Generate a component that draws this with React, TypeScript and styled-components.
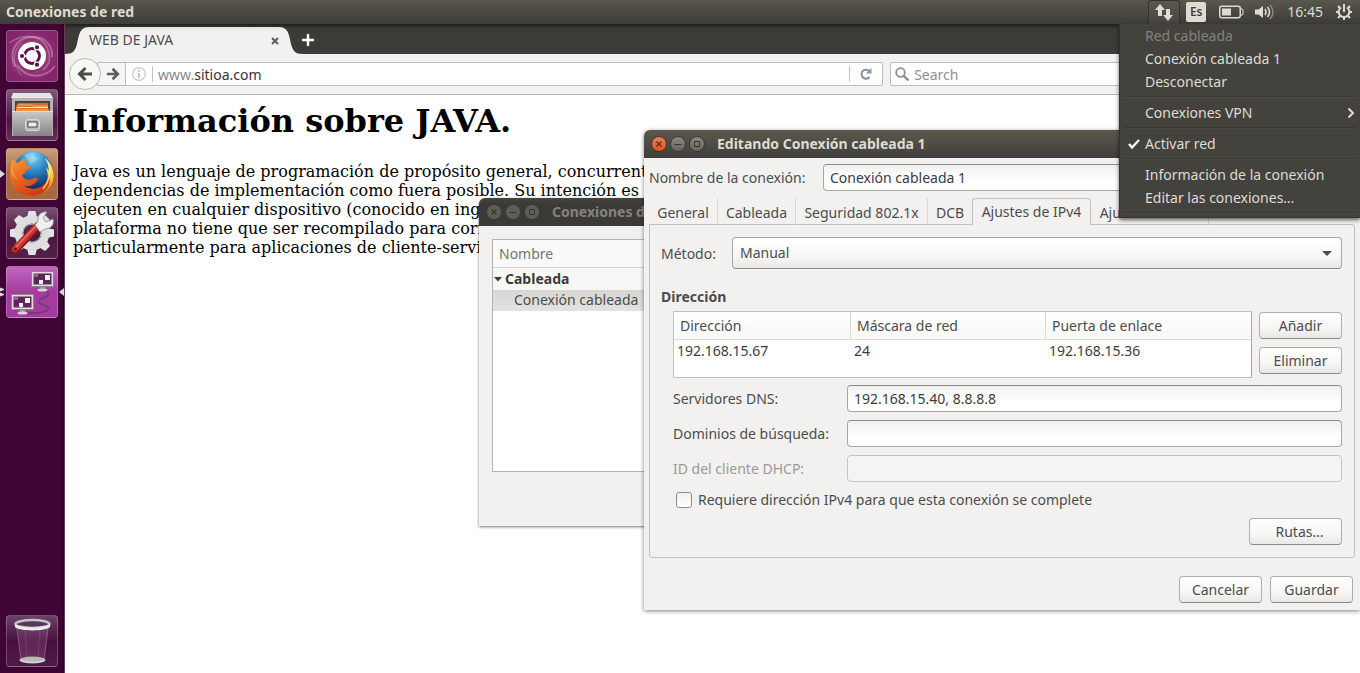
import React from 'react';
import styled, { createGlobalStyle, css } from 'styled-components';

const UI = '"Noto Sans", "Open Sans", sans-serif';

const GlobalStyle = createGlobalStyle`
  *, *::before, *::after { box-sizing: border-box; }
  body { margin: 0; background: #fff; font-family: ${UI}; font-size: 14px; color: #4c4c4c; }
  button, input, select { font: inherit; color: inherit; margin: 0; }
  button { cursor: pointer; }
  svg { display: block; flex: none; }
`;

/* ---------- Desktop and top bar ---------- */

const Desktop = styled.div`
  position: relative;
  display: flex;
  flex-direction: column;
  min-height: 100vh;
  overflow: hidden;
`;

const TopBar = styled.header`
  display: flex;
  align-items: center;
  justify-content: space-between;
  height: 24px;
  padding: 0 7px 0 6px;
  background: linear-gradient(#5a574d, #45433d 70%, #3f3e38);
  color: #dfdbd2;
`;

const AppTitle = styled.span`
  font-weight: 700;
  line-height: 24px;
`;

const Indicators = styled.div`
  display: flex;
  align-items: center;
  height: 24px;
`;

const Indicator = styled.button<{ $open?: boolean; $gap?: number }>`
  display: flex;
  align-items: center;
  justify-content: center;
  height: 24px;
  padding: 0;
  border: 0;
  background: none;
  color: #dfdbd2;
  line-height: 24px;
  margin-left: ${(p) => p.$gap ?? 12}px;
  ${(p) =>
    p.$open &&
    css`
      width: 32px;
      border: 1px solid #33322e;
      border-bottom: 0;
      border-radius: 4px 4px 0 0;
      background: linear-gradient(#5a584f, #45443e);
    `}
`;

const LangBadge = styled.span`
  width: 20px;
  height: 20px;
  border-radius: 2px;
  background: #dfdbd2;
  color: #3f3e38;
  font-size: 12px;
  font-weight: 600;
  line-height: 20px;
  text-align: center;
`;

const Workspace = styled.div`
  display: flex;
  flex: 1;
`;

/* ---------- Launcher ---------- */

const Launcher = styled.nav`
  display: flex;
  flex-direction: column;
  gap: 7px;
  width: 65px;
  padding: 6px;
  background: #3f0535;
  border-right: 1px solid #683a60;
  box-shadow: inset -2px 0 0 #340029;
`;

const LauncherButton = styled.button<{ $bg: string; $last?: boolean }>`
  position: relative;
  width: 52px;
  height: 52px;
  padding: 0;
  border: 1px solid rgba(255, 255, 255, 0.22);
  border-radius: 4px;
  background: ${(p) => p.$bg};
  margin-top: ${(p) => (p.$last ? 'auto' : '0')};
`;

const Pip = styled.svg<{ $side: 'left' | 'right' }>`
  position: absolute;
  top: 20px;
  ${(p) => (p.$side === 'left' ? 'left: -7px;' : 'right: -7px;')}
`;

/* ---------- Browser ---------- */

const Browser = styled.section`
  display: flex;
  flex-direction: column;
  flex: 1;
  min-width: 0;
  background: #fff;
`;

const TabStrip = styled.div`
  display: flex;
  height: 30px;
  background: linear-gradient(#1f1e1c, #383733 4px, #3c3b37 8px);
`;

const BrowserTab = styled.div`
  display: flex;
  align-items: center;
  justify-content: space-between;
  width: 190px;
  height: 27px;
  margin-top: 3px;
  background: linear-gradient(#dededc, #f2f1f0 4px);
  line-height: 26px;
  > span { margin-top: -2px; }
`;

const IconButton = styled.button`
  display: flex;
  align-items: center;
  justify-content: center;
  padding: 0;
  border: 0;
  background: none;
`;

const NewTab = styled(IconButton)`
  width: 18px;
  height: 30px;
  padding-top: 2px;
  margin-left: -4px;
`;

const NavBar = styled.div`
  display: flex;
  align-items: center;
  height: 41px;
  padding: 0 8px 0 4px;
  background: #f2f1f0;
  border-bottom: 1px solid #b9b8b6;
`;

const BackButton = styled(IconButton)`
  position: relative;
  z-index: 1;
  width: 32px;
  height: 32px;
  flex: none;
  border: 1px solid #b9b8b6;
  border-radius: 50%;
  background: #f8f7f6;
`;

const UrlBox = styled.div`
  display: flex;
  align-items: center;
  flex: 1;
  min-width: 0;
  height: 24px;
  margin-left: -4px;
  border: 1px solid #bdbcba;
  border-radius: 0 2px 2px 0;
  background: #fff;
`;

const ForwardButton = styled(IconButton)`
  width: 28px;
  height: 22px;
  padding-left: 2px;
  border-right: 1px solid #bdbcba;
  background: #f6f5f4;
`;

const Divider = styled.span`
  width: 1px;
  height: 16px;
  background: #c4c3c1;
`;

const Address = styled.a`
  flex: 1;
  padding-left: 5px;
  color: #8b8b8b;
  text-decoration: none;
  b { font-weight: 400; color: #333; }
`;

const ReloadButton = styled(IconButton)`
  width: 32px;
  height: 22px;
`;

const SearchBox = styled.label`
  display: flex;
  align-items: center;
  width: 36%;
  height: 24px;
  margin-left: 7px;
  padding-left: 4px;
  gap: 5px;
  border: 1px solid #bdbcba;
  border-radius: 2px;
  background: #fff;
`;

const SearchInput = styled.input`
  flex: 1;
  min-width: 0;
  height: 20px;
  padding: 0;
  border: 0;
  outline: 0;
  background: none;
  &::placeholder { color: #8f8f8f; opacity: 1; }
`;

const WebPage = styled.main`
  padding: 8px;
  color: #000;
  font-family: "DejaVu Serif", serif;
  font-size: 16px;
  line-height: 19px;
  white-space: nowrap;
  overflow: hidden;
  h1 { margin: 0 0 22px; font-size: 32px; line-height: 37px; }
  p { margin: 0; }
`;

/* ---------- Windows ---------- */

const ListWindow = styled.section`
  position: absolute;
  left: 479px;
  top: 198px;
  width: 500px;
  border-radius: 6px 6px 0 0;
  background: #f2f1f0;
  box-shadow: 0 1px 3px rgba(0, 0, 0, 0.55);
`;

const EditWindow = styled.section`
  position: absolute;
  left: 644px;
  right: 0;
  top: 130px;
  border-radius: 6px 6px 0 0;
  background: #f2f1f0;
  box-shadow: 0 1px 4px rgba(0, 0, 0, 0.5);
`;

const TitleBar = styled.header<{ $active?: boolean }>`
  display: flex;
  align-items: center;
  gap: 3px;
  height: 28px;
  padding-left: 7px;
  border-radius: 6px 6px 0 0;
  background: ${(p) => (p.$active ? 'linear-gradient(#5c584f, #403f3a)' : 'linear-gradient(#45443f, #3b3a36 6px)')};
  color: ${(p) => (p.$active ? '#dfdbd2' : '#85827b')};
  font-weight: 700;
  h2 { margin: 0 0 0 9px; font-size: 14px; line-height: 28px; white-space: nowrap; }
`;

const WindowButton = styled.button<{ $tone: 'close' | 'plain' | 'dim' }>`
  display: flex;
  align-items: center;
  justify-content: center;
  width: 16px;
  height: 16px;
  flex: none;
  padding: 0;
  border: 1px solid #3b3a35;
  border-radius: 50%;
  color: #35342f;
  background: ${(p) =>
    ({ close: 'linear-gradient(#f37f58, #e2501f)', plain: 'linear-gradient(#8a877e, #66645c)', dim: '#5f5d57' })[p.$tone]};
`;

const ListBody = styled.div`
  padding: 13px 13px 54px;
`;

const ConnectionTable = styled.table`
  display: block;
  height: 233px;
  border: 1px solid #b3b2b0;
  background: #fff;
  border-spacing: 0;
  white-space: nowrap;
  tbody, thead, tr { display: block; }
`;

const NameHead = styled.th`
  display: block;
  height: 28px;
  padding: 0 6px;
  border-bottom: 1px solid #d4d3d1;
  background: #fafafa;
  color: #73726f;
  font-weight: 400;
  line-height: 28px;
  text-align: left;
`;

const GroupCell = styled.td`
  display: block;
  height: 22px;
  padding: 0 1px;
  background: #f7f7f6;
  color: #3c3c3c;
  font-weight: 700;
  line-height: 22px;
  span { display: flex; align-items: center; gap: 3px; }
`;

const ConnectionCell = styled.td`
  display: block;
  height: 21px;
  padding: 0 0 0 21px;
  background: linear-gradient(#d8d6d3, #e4e2e0);
  line-height: 20px;
`;

const EditBody = styled.form`
  padding: 6px 5px 7px;
`;

const NameRow = styled.div`
  display: grid;
  grid-template-columns: 174px 1fr;
  align-items: center;
  margin-bottom: 7px;
`;

const Field = styled.input`
  width: 100%;
  height: 27px;
  padding: 0 6px;
  border: 1px solid #a9a7a4;
  border-top-color: #8d8b88;
  border-radius: 4px;
  outline: 0;
  background: linear-gradient(#f0f0ef, #fff 16px);
  color: #3c3c3c;
  &:disabled { background: #f4f4f4; border-color: #c6c4c1; }
`;

const Tabs = styled.div`
  display: flex;
  height: 27px;
  margin-bottom: -1px;
  position: relative;
`;

const Tab = styled.button<{ $w: number; $active?: boolean }>`
  width: ${(p) => p.$w}px;
  height: 27px;
  padding: 2px 0 0;
  border: 0;
  border-right: 1px solid #dad8d6;
  background: none;
  line-height: 20px;
  white-space: nowrap;
  ${(p) =>
    p.$active &&
    css`
      padding: 0;
      border: 1px solid #c3c1be;
      border-bottom: 0;
      border-radius: 4px 4px 0 0;
      background: #f2f1f0;
      margin-left: -1px;
    `}
`;

const Panel = styled.div`
  padding: 12px 12px 12px 11px;
  border: 1px solid #c3c1be;
  border-radius: 0 3px 3px 3px;
`;

const MethodRow = styled.div`
  display: grid;
  grid-template-columns: 71px 1fr;
  align-items: center;
`;

const SelectWrap = styled.div`
  display: grid;
  align-items: center;
  > * { grid-area: 1 / 1; }
  svg { justify-self: end; margin-right: 10px; pointer-events: none; }
`;

const Select = styled.select`
  appearance: none;
  width: 100%;
  height: 32px;
  padding: 0 7px 2px;
  border: 1px solid #a9a7a4;
  border-bottom-color: #8d8b88;
  border-radius: 4px;
  background: linear-gradient(#fff, #f7f7f6 60%, #e9e8e6);
`;

const SectionTitle = styled.h3`
  margin: 17px 0 4px;
  font-size: 14px;
  line-height: 21px;
`;

const Indented = styled.div`
  padding-left: 12px;
`;

const AddressRow = styled.div`
  display: grid;
  grid-template-columns: 1fr 83px;
  gap: 7px;
  margin-bottom: 7px;
`;

const AddressFrame = styled.div`
  height: 67px;
  border: 1px solid #c3c1be;
  border-right-color: #a9a7a4;
  background: #fff;
`;

const AddressTable = styled.table`
  width: 100%;
  table-layout: fixed;
  border-spacing: 0;
  th {
    height: 28px;
    padding: 0 6px;
    border-right: 1px solid #dddbd9;
    border-bottom: 1px solid #dddbd9;
    background: linear-gradient(#fff, #f8f8f7);
    font-weight: 400;
    text-align: left;
  }
  th:last-child { border-right: 0; }
  td { height: 22px; padding: 0 3px; color: #3c3c3c; line-height: 22px; }
`;

const ButtonStack = styled.div`
  display: flex;
  flex-direction: column;
  gap: 8px;
  padding-top: 1px;
`;

const PushButton = styled.button<{ $w?: number }>`
  width: ${(p) => p.$w ?? 83}px;
  height: 27px;
  padding: 0;
  border: 1px solid #b0aeab;
  border-bottom-color: #8d8b88;
  border-radius: 4px;
  background: linear-gradient(#fff, #f6f6f5 60%, #e9e8e6);
  line-height: 24px;
`;

const RoutesButton = styled(PushButton)`
  display: block;
  margin-left: auto;
  padding-left: 8px;
`;

const FieldGrid = styled.div`
  display: grid;
  grid-template-columns: 174px 1fr;
  align-items: center;
  row-gap: 8px;
`;

const FieldLabel = styled.label<{ $disabled?: boolean }>`
  color: ${(p) => (p.$disabled ? '#9b9a97' : 'inherit')};
  white-space: nowrap;
`;

const CheckRow = styled.label`
  display: flex;
  align-items: center;
  gap: 6px;
  height: 20px;
  margin: 8px 0;
  padding-left: 3px;
  line-height: 20px;
`;

const CheckBox = styled.input`
  appearance: none;
  width: 16px;
  height: 16px;
  border: 1px solid #8d8b88;
  border-radius: 3px;
  background: linear-gradient(#f1f1f0, #fff);
`;

const Footer = styled.footer`
  display: flex;
  justify-content: flex-end;
  gap: 8px;
  padding: 18px 2px 0 0;
`;

/* ---------- Network menu ---------- */

const Menu = styled.ul`
  position: absolute;
  top: 24px;
  right: 0;
  width: 241px;
  margin: 0;
  padding: 0 4px;
  list-style: none;
  background: #43423c;
  border-left: 1px solid #33322e;
  border-bottom: 1px solid #33322e;
  box-shadow: 0 2px 4px rgba(0, 0, 0, 0.6);
`;

const MenuButton = styled.button`
  display: grid;
  grid-template-columns: 21px 1fr auto;
  align-items: center;
  width: 100%;
  height: 23px;
  padding: 0 1px 0 0;
  border: 0;
  background: none;
  color: #dfdbd2;
  line-height: 23px;
  text-align: left;
  white-space: nowrap;
  &:disabled { color: #85837b; }
`;

const Separator = styled.li`
  height: 8px;
  padding-top: 3px;
  &::before {
    content: "";
    display: block;
    height: 2px;
    border-top: 1px solid #393833;
    border-bottom: 1px solid #4b4a44;
  }
`;

/* ---------- Drawings ---------- */

const UbuntuLogo = () => (
  <svg width="50" height="50" viewBox="0 0 50 50">
    <g fill="none" stroke="#fff" strokeOpacity=".28">
      <path d="M8 36C1 21 9 7 24 6c13-1 22 8 21 20" strokeWidth="2" />
      <path d="M15 45C4 33 6 18 15 12" strokeWidth="1" />
      <path d="M2 12C18 1 38 4 42 22c2 9-2 14-6 17" strokeWidth="1.5" />
      <path d="M48 35C38 48 19 48 10 34" strokeWidth="2" />
    </g>
    <circle cx="25" cy="26.500" r="14" fill="#430b3b" opacity=".3" />
    <circle cx="25" cy="25" r="14" fill="#fff" />
    <circle cx="25" cy="25" r="7.5" fill="none" stroke="#5c0f4c" strokeWidth="2.800" />
    <path d="M12 25h7M28 19.800l4-7M28 30.200l4 7" stroke="#fff" strokeWidth="1.500" />
    <g stroke="#fff" strokeWidth="1.200" fill="#5c0f4c">
      <circle cx="15" cy="25" r="2.700" />
      <circle cx="30" cy="16.300" r="2.700" />
      <circle cx="30" cy="33.700" r="2.700" />
    </g>
  </svg>
);

const FilesIcon = () => (
  <svg width="50" height="50" viewBox="0 0 50 50">
    <defs>
      <linearGradient id="cab" x2="0" y2="1"><stop stopColor="#c9c9c9" /><stop offset="1" stopColor="#858585" /></linearGradient>
    </defs>
    <path d="M6 4h37l3 4v38H5V8z" fill="#b4b4b4" />
    <path d="M6 3h37l3 5H4z" fill="#e7e7e7" />
    <path d="M8 11h35v12H8z" fill="#444" />
    <path d="M11 13h30v9H9v-6z" fill="#d56d25" />
    <path d="M11 15h14l2 1h14" fill="none" stroke="#f7b470" />
    <path d="M10 17h31v1H10z" fill="#fff1d8" />
    <path d="M9 19h33v3H9z" fill="#ee9444" />
    <path d="M5 21h41l-1 25H6z" fill="url(#cab)" />
    <path d="M5 21.500h41" stroke="#ddd" />
    <rect x="18.500" y="29.500" width="14" height="11" rx="2" fill="#bababa" stroke="#d8d8d8" />
    <rect x="21" y="32" width="9" height="5" fill="#eee" stroke="#444" />
  </svg>
);

const FirefoxIcon = () => (
  <svg width="50" height="50" viewBox="0 0 50 50">
    <defs>
      <radialGradient id="globe" cx=".5" cy=".15" r=".8"><stop stopColor="#7fd6f5" /><stop offset=".45" stopColor="#2a86c8" /><stop offset="1" stopColor="#102c66" /></radialGradient>
      <linearGradient id="fox" x1=".1" x2=".6" y2="1"><stop stopColor="#f59a35" /><stop offset=".5" stopColor="#ea6420" /><stop offset="1" stopColor="#cf3a14" /></linearGradient>
      <linearGradient id="tail" x1="0" x2="0" y2="1"><stop stopColor="#fff28c" /><stop offset=".5" stopColor="#fcca2c" /><stop offset="1" stopColor="#ec6b1d" /></linearGradient>
    </defs>
    <circle cx="26" cy="22" r="19.500" fill="url(#globe)" />
    <path d="M17 6c5-3 9-3 12-2-3 3-1 5 4 6-6 1-5 4-9 5z" fill="#c5eefb" opacity=".35" />
    <path d="M38 9c5 4 8 9 8.500 17C47 38 37 46 26 46c7-2 12-6 14-13 2-6 0-11-1-15l3 4c0-5-2-9-4-13z" fill="url(#tail)" />
    <path d="M5 10c2 2 4 3 6 4 2-2 5-4 8-5-1 3-1 5 0 7h5c1 0 1 2-1 3l-4 3c-1 3-3 3-4 4 2 5 7 6 12 3 3-1 5 1 3 3-3 4-8 6-13 5 8 5 17 3 22-4 2-3 2-6 2-8 5 9-1 20-14 21.500C12 48 3 37 3 26 3 20 4 14 5 10z" fill="url(#fox)" />
    <path d="M5 13c0 7 2 14 6 18-4-2-6-5-7-9" fill="#f8b24a" opacity=".55" />
    <path d="M42 15c2 10 0 18-6 25" fill="none" stroke="#fff59d" strokeWidth="1.500" opacity=".8" />
  </svg>
);

const teeth = [0, 45, 90, 135, 180, 225, 270, 315];

const SettingsIcon = () => (
  <svg width="50" height="50" viewBox="0 0 50 50">
    <g fill="#e4e4e4">
      {teeth.map((a) => (
        <path key={a} d="M20 10l1.500-7h7l1.500 7z" transform={`rotate(${a} 25 25)`} />
      ))}
    </g>
    <circle cx="25" cy="25" r="13.500" fill="none" stroke="#dedede" strokeWidth="8" />
    <circle cx="25" cy="25" r="9" fill="none" stroke="#bcbcbc" />
    <path d="M8 42L31 18" stroke="#7e1717" strokeWidth="8" strokeLinecap="round" />
    <path d="M8 41L30 18" stroke="#d0332c" strokeWidth="6" strokeLinecap="round" />
    <path d="M9 39L29 18" stroke="#ee716a" strokeWidth="1.500" strokeLinecap="round" />
    <circle cx="8.500" cy="41" r="1.500" fill="#611" />
    <path d="M28 17l3-4c-1-5 3-10 9-9l-4 6 3 4 7-3c2 6-3 10-8 10l-5 3z" fill="#f1f1f1" stroke="#8a8a8a" strokeWidth=".8" />
  </svg>
);

const Monitor = ({ x, y }: { x: number; y: number }) => (
  <g transform={`translate(${x} ${y})`}>
    <path d="M9 15h5l1 4H8z" fill="#999" />
    <ellipse cx="11.500" cy="19" rx="5" ry="1.500" fill="#d7d9d1" />
    <rect x=".5" y=".5" width="22" height="15" fill="#dfe0dc" stroke="#878984" />
    <rect x="2.500" y="2.500" width="18" height="11" fill="#5c285b" />
    <path d="M14 4h5v5h-5zM8 9h4v4H8z" fill="#fff0ff" />
    <path d="M3 3h4v3H3z" fill="#9f5a9c" />
  </g>
);

const NetworkIcon = () => (
  <svg width="50" height="50" viewBox="0 0 50 50">
    <path d="M36 23c4 2 7 2 5 5s-10 3-9 7 11 3 9 7-10 4-25 4" fill="none" stroke="#64406a" strokeWidth="1.500" />
    <Monitor x={24} y={4} />
    <Monitor x={4} y={27} />
  </svg>
);

const TrashIcon = () => (
  <svg width="50" height="50" viewBox="0 0 50 50">
    <path d="M9 10h33l-5 34c-4 4-19 4-23 0z" fill="#b07ba8" opacity=".22" />
    <path d="M10 12l4 32M41 12l-4 32" stroke="#c9b6c7" opacity=".35" />
    <path d="M18 14l2 28M33 14l-2 28" stroke="#c9b6c7" opacity=".15" />
    <ellipse cx="25.500" cy="44" rx="13" ry="3.500" fill="#b9b9b5" />
    <path d="M13 44c5 3 20 3 25 0" stroke="#e5e5e1" fill="none" />
    <ellipse cx="25.500" cy="8" rx="17" ry="4" fill="#59345a" stroke="#c4c4c0" strokeWidth="2.500" />
    <path d="M8 8v3c4 4.500 31 4.500 35 0V8c-4 4.500-31 4.500-35 0z" fill="#ebebe8" />
  </svg>
);

const WindowControls = ({ active }: { active?: boolean }) => (
  <>
    <WindowButton type="button" aria-label="Cerrar" $tone={active ? 'close' : 'dim'}>
      <svg width="8" height="8" viewBox="0 0 8 8"><path d="M1.500 1.500l5 5M6.500 1.500l-5 5" stroke="currentColor" strokeWidth="1.200" /></svg>
    </WindowButton>
    <WindowButton type="button" aria-label="Minimizar" $tone={active ? 'plain' : 'dim'}>
      <svg width="8" height="8" viewBox="0 0 8 8"><path d="M.5 4.500h7" stroke="currentColor" /></svg>
    </WindowButton>
    <WindowButton type="button" aria-label="Maximizar" $tone={active ? 'plain' : 'dim'}>
      <svg width="8" height="8" viewBox="0 0 8 8"><path d="M1.500 1.500h5v5h-5z" fill="none" stroke="currentColor" /></svg>
    </WindowButton>
  </>
);

const TabCap = ({ flip }: { flip?: boolean }) => (
  <svg width="24" height="30" viewBox="0 0 24 30">
    <defs>
      <linearGradient id="capShade" gradientUnits="userSpaceOnUse" x1="0" y1="3" x2="0" y2="7">
        <stop stopColor="#dededc" /><stop offset="1" stopColor="#f2f1f0" />
      </linearGradient>
    </defs>
    <path transform={flip ? 'matrix(-1 0 0 1 24 0)' : undefined} d="M0 30C8 30 10 27 12 20 14 10 15 3 24 3V30z" fill="url(#capShade)" />
  </svg>
);

const launcherItems = [
  { name: 'Buscar', bg: 'radial-gradient(circle, #b0518f, #84246b 75%)', icon: <UbuntuLogo /> },
  { name: 'Archivos', bg: 'linear-gradient(#80597a, #4c1542 60%, #643057)', icon: <FilesIcon /> },
  { name: 'Firefox', bg: 'linear-gradient(#c99f7c, #ad6a40 50%, #a8683d)', icon: <FirefoxIcon />, pips: 1 },
  { name: 'Configuración', bg: 'linear-gradient(#7a4f73, #4c1542 55%, #572049)', icon: <SettingsIcon /> },
  { name: 'Conexiones', bg: 'linear-gradient(#c165bb, #a63aa2 50%, #a33a9f)', icon: <NetworkIcon />, pips: 2 },
];

const tabs = [
  { label: 'General', w: 69 },
  { label: 'Cableada', w: 78 },
  { label: 'Seguridad 802.1x', w: 132 },
  { label: 'DCB', w: 45 },
  { label: 'Ajustes de IPv4', w: 119, active: true },
  { label: 'Ajustes de IPv6', w: 118 },
];

export default function App() {
  return (
    <Desktop>
      <GlobalStyle />
      <TopBar>
        <AppTitle>Conexiones de red</AppTitle>
        <Indicators>
          <Indicator aria-label="Red" $open>
            <svg width="18" height="18" viewBox="0 0 18 18" fill="#dfdbd2">
              <path d="M5 0L0 6h3v6h4V6h3zM13 17l5-6h-3V5h-4v6H8z" />
            </svg>
          </Indicator>
          <Indicator $gap={6}><LangBadge>Es</LangBadge></Indicator>
          <Indicator aria-label="Batería" $gap={13}>
            <svg width="25" height="14" viewBox="0 0 25 14">
              <rect x=".75" y="1.250" width="20.500" height="11.500" rx="2" fill="none" stroke="#dfdbd2" strokeWidth="1.500" />
              <path d="M3 3.500h9v7H3z" fill="#dfdbd2" />
              <path d="M21.500 4h1.500q1 0 1 1v4q0 1-1 1h-1.500" fill="none" stroke="#dfdbd2" />
            </svg>
          </Indicator>
          <Indicator aria-label="Sonido" $gap={11}>
            <svg width="20" height="18" viewBox="0 0 20 18" fill="none">
              <path d="M0 6.500h3.500L8 3v12l-4.500-3.500H0z" fill="#dfdbd2" />
              <path d="M10 6q2 3 0 6" stroke="#dfdbd2" strokeWidth="1.600" />
              <path d="M12.500 4q4 5 0 10" stroke="#dfdbd2" strokeWidth="1.600" />
              <path d="M15 2q6 7 0 14" stroke="#8b887f" strokeWidth="1.600" />
            </svg>
          </Indicator>
          <Indicator $gap={12}>16:45</Indicator>
          <Indicator aria-label="Sesión" $gap={12}>
            <svg width="18" height="18" viewBox="0 0 18 18" fill="none" stroke="#dfdbd2">
              <path d="M6 4.500a5.300 5.300 0 1 0 6 0" strokeWidth="2" />
              <path d="M9 1v8" strokeWidth="2" />
              <path d="M3.500 9H1M17 9h-2.500M5 13l-2 2M13 13l2 2M9 14.500V17M5 5L3 3M13 5l2-2" strokeWidth="2" />
            </svg>
          </Indicator>
        </Indicators>
      </TopBar>

      <Workspace>
        <Launcher aria-label="Lanzador">
          {launcherItems.map((item) => (
            <LauncherButton key={item.name} aria-label={item.name} $bg={item.bg}>
              {item.icon}
              {item.pips === 1 && (
                <Pip $side="left" width="5" height="10" viewBox="0 0 5 10"><path d="M0 1l5 4-5 4z" fill="#ddd6dc" /></Pip>
              )}
              {item.pips === 2 && (
                <>
                  <Pip $side="left" width="5" height="10" viewBox="0 0 5 10"><path d="M0 1l4 1.500L0 4zM0 6l4 1.500L0 9z" fill="#ddd6dc" stroke="#ddd6dc" /></Pip>
                  <Pip $side="right" width="5" height="10" viewBox="0 0 5 10"><path d="M5 1L0 5l5 4z" fill="#ddd6dc" /></Pip>
                </>
              )}
            </LauncherButton>
          ))}
          <LauncherButton aria-label="Papelera" $bg="linear-gradient(#6d4166, #481040 50%, #501a48)" $last>
            <TrashIcon />
          </LauncherButton>
        </Launcher>

        <Browser>
          <TabStrip>
            <TabCap />
            <BrowserTab>
              <span>WEB DE JAVA</span>
              <IconButton aria-label="Cerrar pestaña">
                <svg width="8" height="8" viewBox="0 0 8 8"><path d="M1 1l6 6M7 1L1 7" stroke="#5c5c5a" strokeWidth="2" /></svg>
              </IconButton>
            </BrowserTab>
            <TabCap flip />
            <NewTab aria-label="Nueva pestaña">
              <svg width="14" height="14" viewBox="0 0 14 14"><path d="M7 1v12M1 7h12" stroke="#fff" strokeWidth="2.400" /></svg>
            </NewTab>
          </TabStrip>
          <NavBar>
            <BackButton aria-label="Atrás">
              <svg width="16" height="16" viewBox="0 0 16 16"><path d="M15 8H3M8.500 2L2.500 8l6 6" fill="none" stroke="#4c4c4c" strokeWidth="3" /></svg>
            </BackButton>
            <UrlBox>
              <ForwardButton aria-label="Adelante">
                <svg width="14" height="14" viewBox="0 0 16 16"><path d="M1 8h12M7.500 2l6 6-6 6" fill="none" stroke="#5c5c5a" strokeWidth="3" /></svg>
              </ForwardButton>
              <IconButton aria-label="Información del sitio">
                <svg width="26" height="16" viewBox="0 0 26 16"><circle cx="13" cy="8" r="6.300" fill="none" stroke="#cacac8" strokeWidth="1.200" /><path d="M13 7v5M13 4v1.800" stroke="#c0c0be" strokeWidth="1.800" /></svg>
              </IconButton>
              <Divider />
              <Address href="#">www.<b>sitioa.com</b></Address>
              <Divider />
              <ReloadButton aria-label="Recargar">
                <svg width="14" height="14" viewBox="0 0 14 14"><path d="M10.500 10A4.500 4.500 0 1 1 10 3.800" fill="none" stroke="#8393a0" strokeWidth="2" /><path d="M12.500 1v5.500H7z" fill="#8393a0" /></svg>
              </ReloadButton>
            </UrlBox>
            <SearchBox aria-label="Search">
              <svg width="14" height="14" viewBox="0 0 14 14"><circle cx="5.500" cy="5.500" r="4.300" fill="none" stroke="#8f8f8d" strokeWidth="1.800" /><path d="M8.500 8.500l5 5" stroke="#8f8f8d" strokeWidth="2.400" /></svg>
              <SearchInput type="text" placeholder="Search" />
            </SearchBox>
          </NavBar>
          <WebPage>
            <h1>Información sobre JAVA.</h1>
            <p>
              Java es un lenguaje de programación de propósito general, concurrent<br />
              dependencias de implementación como fuera posible. Su intención es p<br />
              ejecuten en cualquier dispositivo (conocido en ingl<br />
              plataforma no tiene que ser recompilado para corr<br />
              particularmente para aplicaciones de cliente-servic
            </p>
          </WebPage>
        </Browser>
      </Workspace>

      <ListWindow>
        <TitleBar>
          <WindowControls />
          <h2>Conexiones d</h2>
        </TitleBar>
        <ListBody>
          <ConnectionTable>
            <thead><tr><NameHead>Nombre</NameHead></tr></thead>
            <tbody>
              <tr>
                <GroupCell>
                  <span>
                    <svg width="8" height="5" viewBox="0 0 8 5"><path d="M0 0h8L4 4.500z" fill="#3c3c3c" /></svg>
                    Cableada
                  </span>
                </GroupCell>
              </tr>
              <tr><ConnectionCell>Conexión cableada</ConnectionCell></tr>
            </tbody>
          </ConnectionTable>
        </ListBody>
      </ListWindow>

      <EditWindow>
        <TitleBar $active>
          <WindowControls active />
          <h2>Editando Conexión cableada 1</h2>
        </TitleBar>
        <EditBody onSubmit={(e) => e.preventDefault()}>
          <NameRow>
            <FieldLabel htmlFor="name">Nombre de la conexión:</FieldLabel>
            <Field id="name" defaultValue="Conexión cableada 1" />
          </NameRow>
          <Tabs role="tablist">
            {tabs.map((t) => (
              <Tab key={t.label} type="button" role="tab" aria-selected={!!t.active} $w={t.w} $active={t.active}>
                {t.label}
              </Tab>
            ))}
          </Tabs>
          <Panel>
            <MethodRow>
              <FieldLabel htmlFor="method">Método:</FieldLabel>
              <SelectWrap>
                <Select id="method"><option>Manual</option></Select>
                <svg width="10" height="5" viewBox="0 0 10 5"><path d="M0 0h10L5 5z" fill="#4c4c4c" /></svg>
              </SelectWrap>
            </MethodRow>
            <SectionTitle>Dirección</SectionTitle>
            <Indented>
              <AddressRow>
                <AddressFrame>
                  <AddressTable>
                    <colgroup><col width="177" /><col width="195" /><col /></colgroup>
                    <thead><tr><th>Dirección</th><th>Máscara de red</th><th>Puerta de enlace</th></tr></thead>
                    <tbody><tr><td>192.168.15.67</td><td>24</td><td>192.168.15.36</td></tr></tbody>
                  </AddressTable>
                </AddressFrame>
                <ButtonStack>
                  <PushButton type="button">Añadir</PushButton>
                  <PushButton type="button">Eliminar</PushButton>
                </ButtonStack>
              </AddressRow>
              <FieldGrid>
                <FieldLabel htmlFor="dns">Servidores DNS:</FieldLabel>
                <Field id="dns" defaultValue="192.168.15.40, 8.8.8.8" />
                <FieldLabel htmlFor="domains">Dominios de búsqueda:</FieldLabel>
                <Field id="domains" />
                <FieldLabel htmlFor="dhcp" $disabled>ID del cliente DHCP:</FieldLabel>
                <Field id="dhcp" disabled />
              </FieldGrid>
              <CheckRow>
                <CheckBox type="checkbox" />
                <span>Requiere dirección IPv4 para que esta conexión se complete</span>
              </CheckRow>
              <RoutesButton type="button" $w={93}>Rutas…</RoutesButton>
            </Indented>
          </Panel>
          <Footer>
            <PushButton type="button">Cancelar</PushButton>
            <PushButton type="submit">Guardar</PushButton>
          </Footer>
        </EditBody>
      </EditWindow>

      <Menu>
        <li><MenuButton disabled><i /><span>Red cableada</span></MenuButton></li>
        <li><MenuButton><i /><span>Conexión cableada 1</span></MenuButton></li>
        <li><MenuButton><i /><span>Desconectar</span></MenuButton></li>
        <Separator />
        <li>
          <MenuButton>
            <i /><span>Conexiones VPN</span>
            <svg width="8" height="12" viewBox="0 0 8 12"><path d="M1.500 1.500L6 6l-4.500 4.500" fill="none" stroke="#dfdbd2" strokeWidth="2" /></svg>
          </MenuButton>
        </li>
        <Separator />
        <li>
          <MenuButton>
            <svg width="17" height="12" viewBox="0 0 17 12"><path d="M5 6l3 3.500L15 2" fill="none" stroke="#fff" strokeWidth="2.200" /></svg>
            <span>Activar red</span>
          </MenuButton>
        </li>
        <Separator />
        <li><MenuButton><i /><span>Información de la conexión</span></MenuButton></li>
        <li><MenuButton><i /><span>Editar las conexiones…</span></MenuButton></li>
        <Separator />
      </Menu>
    </Desktop>
  );
}
